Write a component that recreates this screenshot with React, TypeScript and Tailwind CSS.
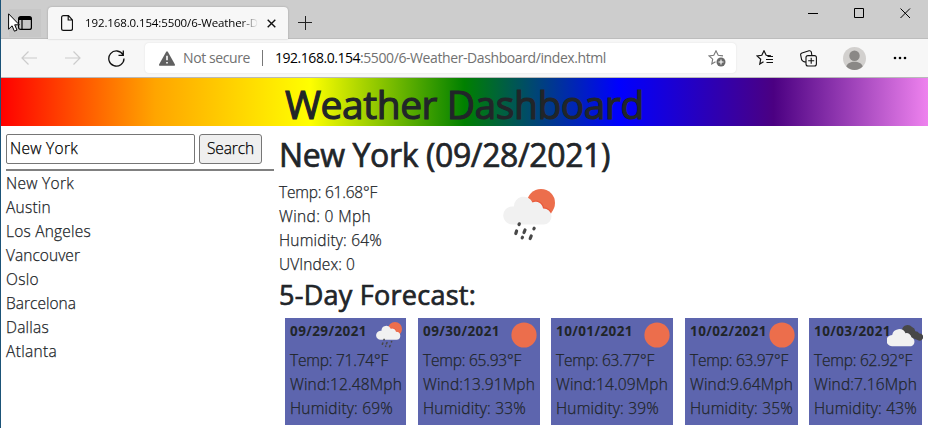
import { useLayoutEffect, useRef } from "react";

type FitProps = { w: number; children: string; className?: string };

/* One line of text whose tracking is adjusted so that it spans w pixels. */
function Fit({ w, children, className = "" }: FitProps) {
  const ref = useRef<HTMLSpanElement>(null);
  useLayoutEffect(() => {
    const el = ref.current;
    if (!el) return;
    el.style.letterSpacing = "0px";
    const natural = el.getBoundingClientRect().width;
    el.style.letterSpacing = `${(w - natural) / children.length}px`;
  }, [w, children]);
  return (
    <span ref={ref} className={`inline-block whitespace-nowrap ${className}`}>
      {children}
    </span>
  );
}

function RainIcon({ className }: { className: string }) {
  return (
    <svg viewBox="0 0 54 52" className={className}>
      <circle cx="38" cy="14" r="14" fill="#ec6e4c" />
      <path d="M29.500 13.500a7.500 7.500 0 0 1 10.500 6 8 8 0 0 1 7.500 5" fill="none" stroke="#e9593b" strokeWidth="2.400" />
      <path
        d="M9.500 35.500a9 9 0 0 1-.6-18 9 9 0 0 1 2-.1A9.700 9.700 0 0 1 29.500 13.500a7.500 7.500 0 0 1 10.500 6 8 8 0 1 1 1 16z"
        fill="#f1f1f1"
      />
      <g stroke="#484848" strokeWidth="3.200" strokeLinecap="round">
        <path d="M16.300 34.800l-.3.700M13.600 42l-.8 2.500M22 41l-1 2.500M31.200 39.300l-.3.500M19.500 48.300l-.3.500M28.200 47l-1 2.500" />
      </g>
    </svg>
  );
}

function SunIcon() {
  return (
    <svg viewBox="0 0 26 26" className="mr-[3.500px] mt-1 size-[26px] shrink-0">
      <circle cx="13" cy="13" r="12.600" fill="#ec6e4c" />
    </svg>
  );
}

function CloudsIcon() {
  return (
    <svg viewBox="0 0 36 23" className="mt-[6px] h-[23px] w-9 shrink-0">
      <path d="M15 5.500a5.800 5.800 0 0 1 10-2.500 5 5 0 0 1 3.300 4.200 4.500 4.500 0 0 1 4 2.300 3.600 3.600 0 1 1-1.800 6.500L20 12z" fill="#484848" />
      <path d="M5.800 22.200a5.600 5.600 0 0 1 .2-11.200A7 7 0 0 1 19.300 9.200a4.800 4.800 0 0 1 5.900 4 4.800 4.800 0 0 1-.2 9z" fill="#f1f1f1" transform="translate(-.8 0)" />
    </svg>
  );
}

type Day = {
  date: string;
  temp: [string, number];
  wind: [string, number];
  humidity: [string, number];
  icon: "rain" | "sun" | "clouds";
  box: string;
};

const days: Day[] = [
  { date: "09/29/2021", temp: ["Temp: 71.74°F", 98], wind: ["Wind:12.48Mph", 112], humidity: ["Humidity: 69%", 103], icon: "rain", box: "w-[121px] mr-3" },
  { date: "09/30/2021", temp: ["Temp: 65.93°F", 98], wind: ["Wind:13.91Mph", 112], humidity: ["Humidity: 33%", 103], icon: "sun", box: "w-[122px] mr-[11px]" },
  { date: "10/01/2021", temp: ["Temp: 63.77°F", 98], wind: ["Wind:14.09Mph", 112], humidity: ["Humidity: 39%", 103], icon: "sun", box: "w-[122px] mr-3" },
  { date: "10/02/2021", temp: ["Temp: 63.97°F", 98], wind: ["Wind:9.64Mph", 103], humidity: ["Humidity: 35%", 103], icon: "sun", box: "w-[113px] mr-[11px]" },
  { date: "10/03/2021", temp: ["Temp: 62.92°F", 98], wind: ["Wind:7.16Mph", 103], humidity: ["Humidity: 43%", 103], icon: "clouds", box: "w-[113px]" },
];

const cities: [string, number][] = [
  ["New York", 68],
  ["Austin", 45],
  ["Los Angeles", 85],
  ["Vancouver", 74],
  ["Oslo", 33],
  ["Barcelona", 70],
  ["Dallas", 43],
  ["Atlanta", 51],
];

const current: [string, number][] = [
  ["Temp: 61.68°F", 98],
  ["Wind: 0 Mph", 92],
  ["Humidity: 64%", 103],
  ["UVIndex: 0", 76],
];

function DayCard({ day }: { day: Day }) {
  return (
    <div className={`h-[107px] shrink-0 bg-[#5d65ae] pl-[5px] ${day.box}`}>
      <div className="flex h-[30px] items-start">
        <Fit w={77} className="-mr-1 mt-[3px] text-[13.500px] font-bold leading-5 [-webkit-text-stroke:0]">{day.date}</Fit>
        <div className="ml-auto flex">
          {day.icon === "rain" && <RainIcon className="mr-[3px] mt-1 h-[26px] w-[27px] shrink-0" />}
          {day.icon === "sun" && <SunIcon />}
          {day.icon === "clouds" && <CloudsIcon />}
        </div>
      </div>
      {[day.temp, day.wind, day.humidity].map(([text, w]) => (
        <div key={text} className="h-6">
          <Fit w={w} className="leading-6">{text}</Fit>
        </div>
      ))}
    </div>
  );
}

function TabStrip() {
  return (
    <div className="relative flex h-[39px] border-b border-[#bdbdbd] bg-[#cdcdcd]">
      <div className="ml-2 mt-[9px] flex h-7 w-8 items-center bg-[#c7c7c7] pl-[9px]">
        <svg viewBox="0 0 14 14" className="size-[14px]" fill="none" stroke="#000">
          <rect x=".6" y=".6" width="12.800" height="12.800" rx="2" strokeWidth="1.200" />
          <path d="M1 2.500h12" strokeWidth="3" />
          <path d="M4 3v10" strokeWidth="1.200" />
        </svg>
      </div>
      <div className="-mb-px ml-[7px] mt-[7px] flex h-8 w-[240px] items-center rounded-t bg-[#f7f7f7] pl-[13px] shadow-[0_0_2px_rgba(0,0,0,.25)]">
        <svg viewBox="0 0 12 16" className="h-4 w-3 shrink-0" fill="none" stroke="#111" strokeWidth="1.200">
          <path d="M2.500.6h5l4 4.400v8.500c0 1.200-.7 1.900-1.900 1.900H2.500C1.300 15.400.6 14.700.6 13.500v-11C.6 1.300 1.300.6 2.500.6zM7.200.8V5h4.200" />
        </svg>
        <div className="ml-3 flex h-5 w-[173px] items-center overflow-hidden mask-r-from-90% text-[11.500px] font-normal text-black [-webkit-text-stroke:0]">
          <Fit w={173}>192.168.0.154:5500/6-Weather-D</Fit>
        </div>
        <svg viewBox="0 0 9 9" className="ml-[9px] size-[9px] shrink-0" stroke="#111" strokeWidth="1.400">
          <path d="M.7.7l7.600 7.600M8.300.7L.7 8.300" />
        </svg>
      </div>
      <svg viewBox="0 0 14 14" className="ml-[10px] mt-4 size-[14px]" stroke="#222" strokeWidth="1">
        <path d="M7.500 0v14M0 6.500h14" />
      </svg>
      <svg viewBox="0 0 104 12" className="ml-auto mr-[17px] mt-[7px] h-3 w-[104px]" fill="none" stroke="#000">
        <path d="M1 6.500h10" />
        <path d="M47.500 1.500h9v9h-9z" />
        <path d="M93.500 1.500l9.500 9.500M103 1.500L93.500 11" />
      </svg>
      <svg viewBox="0 0 12 19" className="absolute left-[7px] top-[13px] h-[19px] w-3" fill="#fff" stroke="#000" strokeWidth="1">
        <path d="M.6.800v15.400l3.500-3.400 2.300 5.400 2.600-1.100-2.300-5.300h4.600z" />
      </svg>
    </div>
  );
}

const STAR = "M7.500 11.800L3.800 14l.9-4.800L1 5.900l4.800-.6L8 .8l2.200 4.500 4.800.6";

function Toolbar() {
  return (
    <div className="flex h-[39px] items-center border-b border-[#b9b9b9] bg-[#f7f7f7]">
      <svg viewBox="0 0 16 14" className="ml-5 h-[14px] w-4" fill="none" stroke="#ccc" strokeWidth="1.200">
        <path d="M16 7H1M7.500.5L1 7l6.500 6.500" />
      </svg>
      <svg viewBox="0 0 16 14" className="ml-7 h-[14px] w-4" fill="none" stroke="#ccc" strokeWidth="1.200">
        <path d="M0 7h15M8.500.5L15 7l-6.500 6.500" />
      </svg>
      <svg viewBox="0 0 17 17" className="ml-[27px] size-[17px]" fill="none" stroke="#111" strokeWidth="1.300">
        <path d="M15 4.800A7.600 7.600 0 1 0 16 8.500M15.300.5v4.800h-4.800" />
      </svg>
      <div className="ml-5 flex h-[30px] w-[591px] items-center rounded bg-white pl-[14px] text-[14px] font-normal text-[#717171] shadow-[0_0_2px_rgba(0,0,0,.1)] [-webkit-text-stroke:0]">
        <svg viewBox="0 0 16 15" className="h-[15px] w-4 shrink-0">
          <path d="M7.200.8a1 1 0 0 1 1.600 0l7 12.500c.4.800 0 1.500-.9 1.500H1.100c-.9 0-1.300-.7-.9-1.500z" fill="#606060" />
          <path d="M8 4.700v4.600M8 11v1.600" stroke="#fff" strokeWidth="1.600" />
        </svg>
        <Fit w={67} className="-mt-px ml-2">Not secure</Fit>
        <div className="ml-3 mr-3 h-4 w-px bg-[#777]" />
        <Fit w={85} className="-mt-px text-black">192.168.0.154</Fit>
        <Fit w={246} className="-mt-px">:5500/6-Weather-Dashboard/index.html</Fit>
        <svg viewBox="0 0 18 17" className="ml-auto mr-[10px] h-[17px] w-[18px]" fill="none" stroke="#777" strokeWidth="1.100">
          <path d={STAR} />
          <circle cx="13" cy="12" r="4.500" fill="#696969" stroke="none" />
          <path d="M13 9.500v5M10.500 12h5" stroke="#fff" />
        </svg>
      </div>
      <svg viewBox="0 0 18 17" className="ml-5 h-[17px] w-[18px]" fill="none" stroke="#111" strokeWidth="1.200">
        <path d={STAR} />
        <path d="M11.500 6.500H17M10 9.500h7M10.500 12.500H17" />
      </svg>
      <svg viewBox="0 0 17 17" className="ml-[26px] size-[17px]" fill="none" stroke="#111" strokeWidth="1.100">
        <path d="M3.500 11.500C2.400 11 1.900 10.500 1.600 9.500L.7 5.200C.4 4 .8 3.300 2 2.900L9 .8c1.200-.3 1.900.1 2.300 1.200l.6 3.600M3.500 11.500C4.200 11.900 5 12 6 12" />
        <rect x="6" y="5.600" width="10.400" height="10.400" rx="2" fill="#f7f7f7" />
        <path d="M11.200 7.800v6M8.200 10.800h6" />
      </svg>
      <svg viewBox="0 0 22 22" className="ml-[26px] size-[23px]">
        <circle cx="11" cy="11" r="11" fill="#d2d0ce" />
        <circle cx="11" cy="8.400" r="5" fill="#8a8886" />
        <path d="M3.200 18.700C4.500 12.700 17.500 12.700 18.800 18.700A11 11 0 0 1 3.200 18.700z" fill="#8a8886" />
      </svg>
      <svg viewBox="0 0 14 4" className="ml-[27px] h-1 w-[14px]">
        <circle cx="2" cy="2" r="1.300" />
        <circle cx="7" cy="2" r="1.300" />
        <circle cx="12" cy="2" r="1.300" />
      </svg>
    </div>
  );
}

export default function App() {
  return (
    <div className="h-[428px] w-[928px] overflow-hidden border-l border-[#1b5378] bg-white font-['Open_Sans','Noto_Sans',sans-serif] text-[15.500px] font-light text-[#212529] [-webkit-text-stroke:0.25px]">
      <TabStrip />
      <Toolbar />
      <header className="flex h-12 bg-[linear-gradient(to_right,red,orange,yellow,green,blue,indigo,violet)] pl-[284px]">
        <Fit w={359} className="h-12 text-[39px] font-normal leading-[52px] [-webkit-text-stroke:1.1px]">Weather Dashboard</Fit>
      </header>
      <main className="flex">
        <aside className="w-[273px] pl-[5px] pt-2">
          <div className="flex h-[30px] gap-1 text-black">
            <div className="flex w-[189px] items-center rounded-[2px] border border-[#767676] bg-white pl-[3px]">
              <Fit w={68}>New York</Fit>
            </div>
            <button className="flex w-[63px] items-center justify-center rounded-[3px] border border-[#767676] bg-[#efefef]">
              <Fit w={47}>Search</Fit>
            </button>
          </div>
          <div className="mt-[5px] h-0.5 bg-[#808080]" />
          <ul>
            {cities.map(([name, w]) => (
              <li key={name} className="h-6">
                <Fit w={w} className="leading-6">{name}</Fit>
              </li>
            ))}
          </ul>
        </aside>
        <section className="pl-[5px] pt-2">
          <h2 className="h-[46px]">
            <Fit w={331} className="text-[32px] font-normal leading-[42px] [-webkit-text-stroke:0.7px]">New York (09/28/2021)</Fit>
          </h2>
          <div className="flex h-24">
            <div className="w-56">
              {current.map(([text, w]) => (
                <div key={text} className="h-6">
                  <Fit w={w} className="leading-6">{text}</Fit>
                </div>
              ))}
            </div>
            <RainIcon className="mt-[9px] h-[52px] w-[54px]" />
          </div>
          <h3 className="h-[42px]">
            <Fit w={197} className="text-[27px] font-normal leading-[37px] [-webkit-text-stroke:0.7px]">5-Day Forecast:</Fit>
          </h3>
          <div className="flex pl-[6px]">
            {days.map((day) => (
              <DayCard key={day.date} day={day} />
            ))}
          </div>
        </section>
      </main>
    </div>
  );
}
